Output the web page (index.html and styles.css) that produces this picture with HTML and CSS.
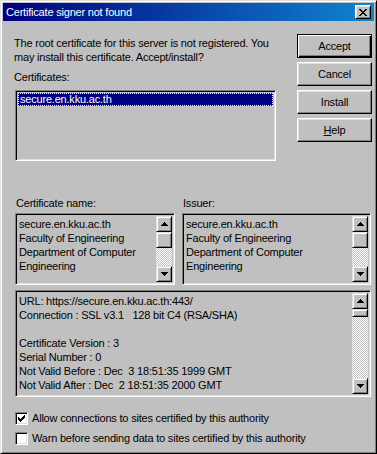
FILE: index.html
```html
<!DOCTYPE html>
<html lang="en">
<head>
    <meta charset="UTF-8">
    <meta name="viewport" content="width=device-width, initial-scale=1.0">
    <title>Certificate signer not found</title>
    <link rel="stylesheet" href="styles.css">
</head>
<body>

    <div class="window">
        <!-- Заголовок окна -->
        <div class="titlebar">
            <span class="title">Certificate signer not found</span>
            <button class="close" aria-label="Close">
                <svg width="8" height="7" viewBox="0 0 8 7"><path d="M0 0h2v1H0z M6 0h2v1H6z M1 1h2v1H1z M5 1h2v1H5z M2 2h4v1H2z M3 3h2v1H3z M2 4h4v1H2z M1 5h2v1H1z M5 5h2v1H5z M0 6h2v1H0z M6 6h2v1H6z" fill="#000"/></svg>
            </button>
        </div>

        <div class="content">
            <div class="top">
                <div class="left">
                    <p class="intro">The root certificate for this server is not registered. You<br>may install this certificate. Accept/install?</p>
                    <div class="label">Certificates:</div>
                    <div class="listbox">
                        <div class="item selected">secure.en.kku.ac.th</div>
                    </div>
                </div>
                <div class="buttons">
                    <button class="button default">Accept</button>
                    <button class="button">Cancel</button>
                    <button class="button">Install</button>
                    <button class="button"><u>H</u>elp</button>
                </div>
            </div>

            <div class="pair">
                <div class="field">
                    <div class="label">Certificate name:</div>
                    <div class="textbox name-box">
                        <div class="text">secure.en.kku.ac.th
Faculty of Engineering
Department of Computer
Engineering</div>
                        <div class="scrollbar">
                            <div class="sb-btn"><svg width="7" height="4" viewBox="0 0 7 4"><path d="M3 0h1v1H3z M2 1h3v1H2z M1 2h5v1H1z M0 3h7v1H0z"/></svg></div>
                            <div class="sb-thumb"></div>
                            <div class="sb-track"></div>
                            <div class="sb-btn"><svg width="7" height="4" viewBox="0 0 7 4"><path d="M0 0h7v1H0z M1 1h5v1H1z M2 2h3v1H2z M3 3h1v1H3z"/></svg></div>
                        </div>
                    </div>
                </div>
                <div class="field">
                    <div class="label">Issuer:</div>
                    <div class="textbox name-box">
                        <div class="text">secure.en.kku.ac.th
Faculty of Engineering
Department of Computer
Engineering</div>
                        <div class="scrollbar">
                            <div class="sb-btn"><svg width="7" height="4" viewBox="0 0 7 4"><path d="M3 0h1v1H3z M2 1h3v1H2z M1 2h5v1H1z M0 3h7v1H0z"/></svg></div>
                            <div class="sb-thumb"></div>
                            <div class="sb-track"></div>
                            <div class="sb-btn"><svg width="7" height="4" viewBox="0 0 7 4"><path d="M0 0h7v1H0z M1 1h5v1H1z M2 2h3v1H2z M3 3h1v1H3z"/></svg></div>
                        </div>
                    </div>
                </div>
            </div>

            <!-- Подробности сертификата -->
            <div class="textbox details">
                <div class="text">URL: https://secure.en.kku.ac.th:443/
Connection : SSL v3.1   128 bit C4 (RSA/SHA)

Certificate Version : 3
Serial Number : 0
Not Valid Before : Dec  3 18:51:35 1999 GMT
Not Valid After : Dec  2 18:51:35 2000 GMT</div>
                <div class="scrollbar">
                    <div class="sb-btn"><svg width="7" height="4" viewBox="0 0 7 4"><path d="M3 0h1v1H3z M2 1h3v1H2z M1 2h5v1H1z M0 3h7v1H0z"/></svg></div>
                    <div class="sb-thumb small"></div>
                    <div class="sb-track"></div>
                    <div class="sb-btn"><svg width="7" height="4" viewBox="0 0 7 4"><path d="M0 0h7v1H0z M1 1h5v1H1z M2 2h3v1H2z M3 3h1v1H3z"/></svg></div>
                </div>
            </div>

            <div class="checks">
                <label class="check">
                    <span class="box"><svg width="7" height="7" viewBox="0 0 7 7"><path d="M6 0h1v1H6z M5 1h2v1H5z M0 2h1v1H0z M4 2h3v1H4z M0 3h2v1H0z M3 3h3v1H3z M0 4h5v1H0z M1 5h3v1H1z M2 6h1v1H2z"/></svg></span>
                    Allow connections to sites certified by this authority
                </label>
                <label class="check">
                    <span class="box"></span>
                    Warn before sending data to sites certified by this authority
                </label>
            </div>
        </div>
    </div>

</body>
</html>
```

FILE: styles.css
```css
body {
    margin: 0;
    font-family: "Liberation Sans", Arial, sans-serif;
    font-size: 11px;
    letter-spacing: -0.2px;
    color: #000;
    background: #c0c0c0;
}

.window {
    width: 377px;
    height: 454px;
    box-sizing: border-box;
    background: #c0c0c0;
    border: 1px solid;
    border-color: #dfdfdf #000 #000 #dfdfdf;
    box-shadow: inset 1px 1px #fff, inset -1px -1px #808080;
    padding: 2px;
}

/* Заголовок */
.titlebar {
    height: 18px;
    background: linear-gradient(90deg, #000080, #1084d0);
    color: #fff;
    display: flex;
    align-items: center;
    justify-content: space-between;
    padding: 0 3px 0 3px;
}

.close {
    width: 16px;
    height: 14px;
    box-sizing: border-box;
    padding: 0;
    background: #c0c0c0;
    border: 1px solid;
    border-color: #fff #000 #000 #fff;
    box-shadow: inset 1px 1px #dfdfdf, inset -1px -1px #808080;
    display: flex;
    align-items: center;
    justify-content: center;
}

.content {
    padding: 13px 2px 0 11px;
}

.top {
    display: flex;
    justify-content: space-between;
}

.left {
    width: 262px;
}

.intro {
    margin: 2px 0 0;
    line-height: 14px;
}

.label {
    line-height: 14px;
}

.left .label {
    margin: 6px 0 6px;
}

.listbox {
    margin-left: 1px;
    height: 71px;
    box-sizing: border-box;
    border: 1px solid;
    border-color: #808080 #fff #fff #808080;
    box-shadow: inset 1px 1px #000, inset -1px -1px #dfdfdf;
    padding: 2px 2px;
}

.item {
    height: 13px;
    line-height: 11px;
    box-sizing: border-box;
    padding-left: 1px;
}

.item.selected {
    background: #000080;
    color: #fff;
    border: 1px dotted #fffbd0;
}

.buttons {
    display: flex;
    flex-direction: column;
    gap: 4px;
}

.button {
    width: 75px;
    height: 24px;
    box-sizing: border-box;
    background: #c0c0c0;
    font: inherit;
    letter-spacing: inherit;
    color: #000;
    border: 1px solid;
    border-color: #fff #000 #000 #fff;
    box-shadow: inset -1px -1px #808080, inset 1px 1px #dfdfdf;
    padding: 0;
}

.button.default {
    border-color: #000;
    box-shadow: inset 1px 1px #fff, inset -1px -1px #000, inset -2px -2px #808080;
}

/* Поля имени и издателя */
.pair {
    display: grid;
    grid-template-columns: 160px 189px;
    gap: 7px;
    margin: 35px 0 0 1px;
}

.field .label {
    padding-left: 1px;
    margin-bottom: 3px;
}

.textbox {
    display: flex;
    box-sizing: border-box;
    border: 1px solid;
    border-color: #808080 #fff #fff #808080;
    box-shadow: inset 1px 1px #000, inset -1px -1px #dfdfdf;
    padding: 2px;
}

.name-box {
    height: 72px;
}

.text {
    flex: 1;
    white-space: pre;
    line-height: 14px;
    padding: 1px 0 0 1px;
    overflow: hidden;
}

.details {
    margin: 5px 0 0 1px;
    width: 356px;
    height: 107px;
}

.details .text {
    padding-top: 1px;
}

/* Полоса прокрутки */
.scrollbar {
    width: 16px;
    display: flex;
    flex-direction: column;
}

.sb-btn,
.sb-thumb {
    width: 16px;
    height: 16px;
    box-sizing: border-box;
    background: #c0c0c0;
    border: 1px solid;
    border-color: #dfdfdf #000 #000 #dfdfdf;
    box-shadow: inset 1px 1px #fff, inset -1px -1px #808080;
    display: flex;
    align-items: center;
    justify-content: center;
}

.sb-thumb.small {
    height: 8px;
}

.sb-track {
    flex: 1;
    background: repeating-conic-gradient(#c0c0c0 0 25%, #fff 0 50%) 0 0 / 2px 2px;
}

/* Флажки */
.checks {
    margin: 15px 0 0 1px;
    display: flex;
    flex-direction: column;
    gap: 7px;
}

.check {
    display: flex;
    align-items: center;
    gap: 4px;
    line-height: 13px;
}

.box {
    width: 13px;
    height: 13px;
    box-sizing: border-box;
    background: #fff;
    border: 1px solid;
    border-color: #808080 #fff #fff #808080;
    box-shadow: inset 1px 1px #000, inset -1px -1px #dfdfdf;
    display: flex;
    align-items: center;
    justify-content: center;
}
```
